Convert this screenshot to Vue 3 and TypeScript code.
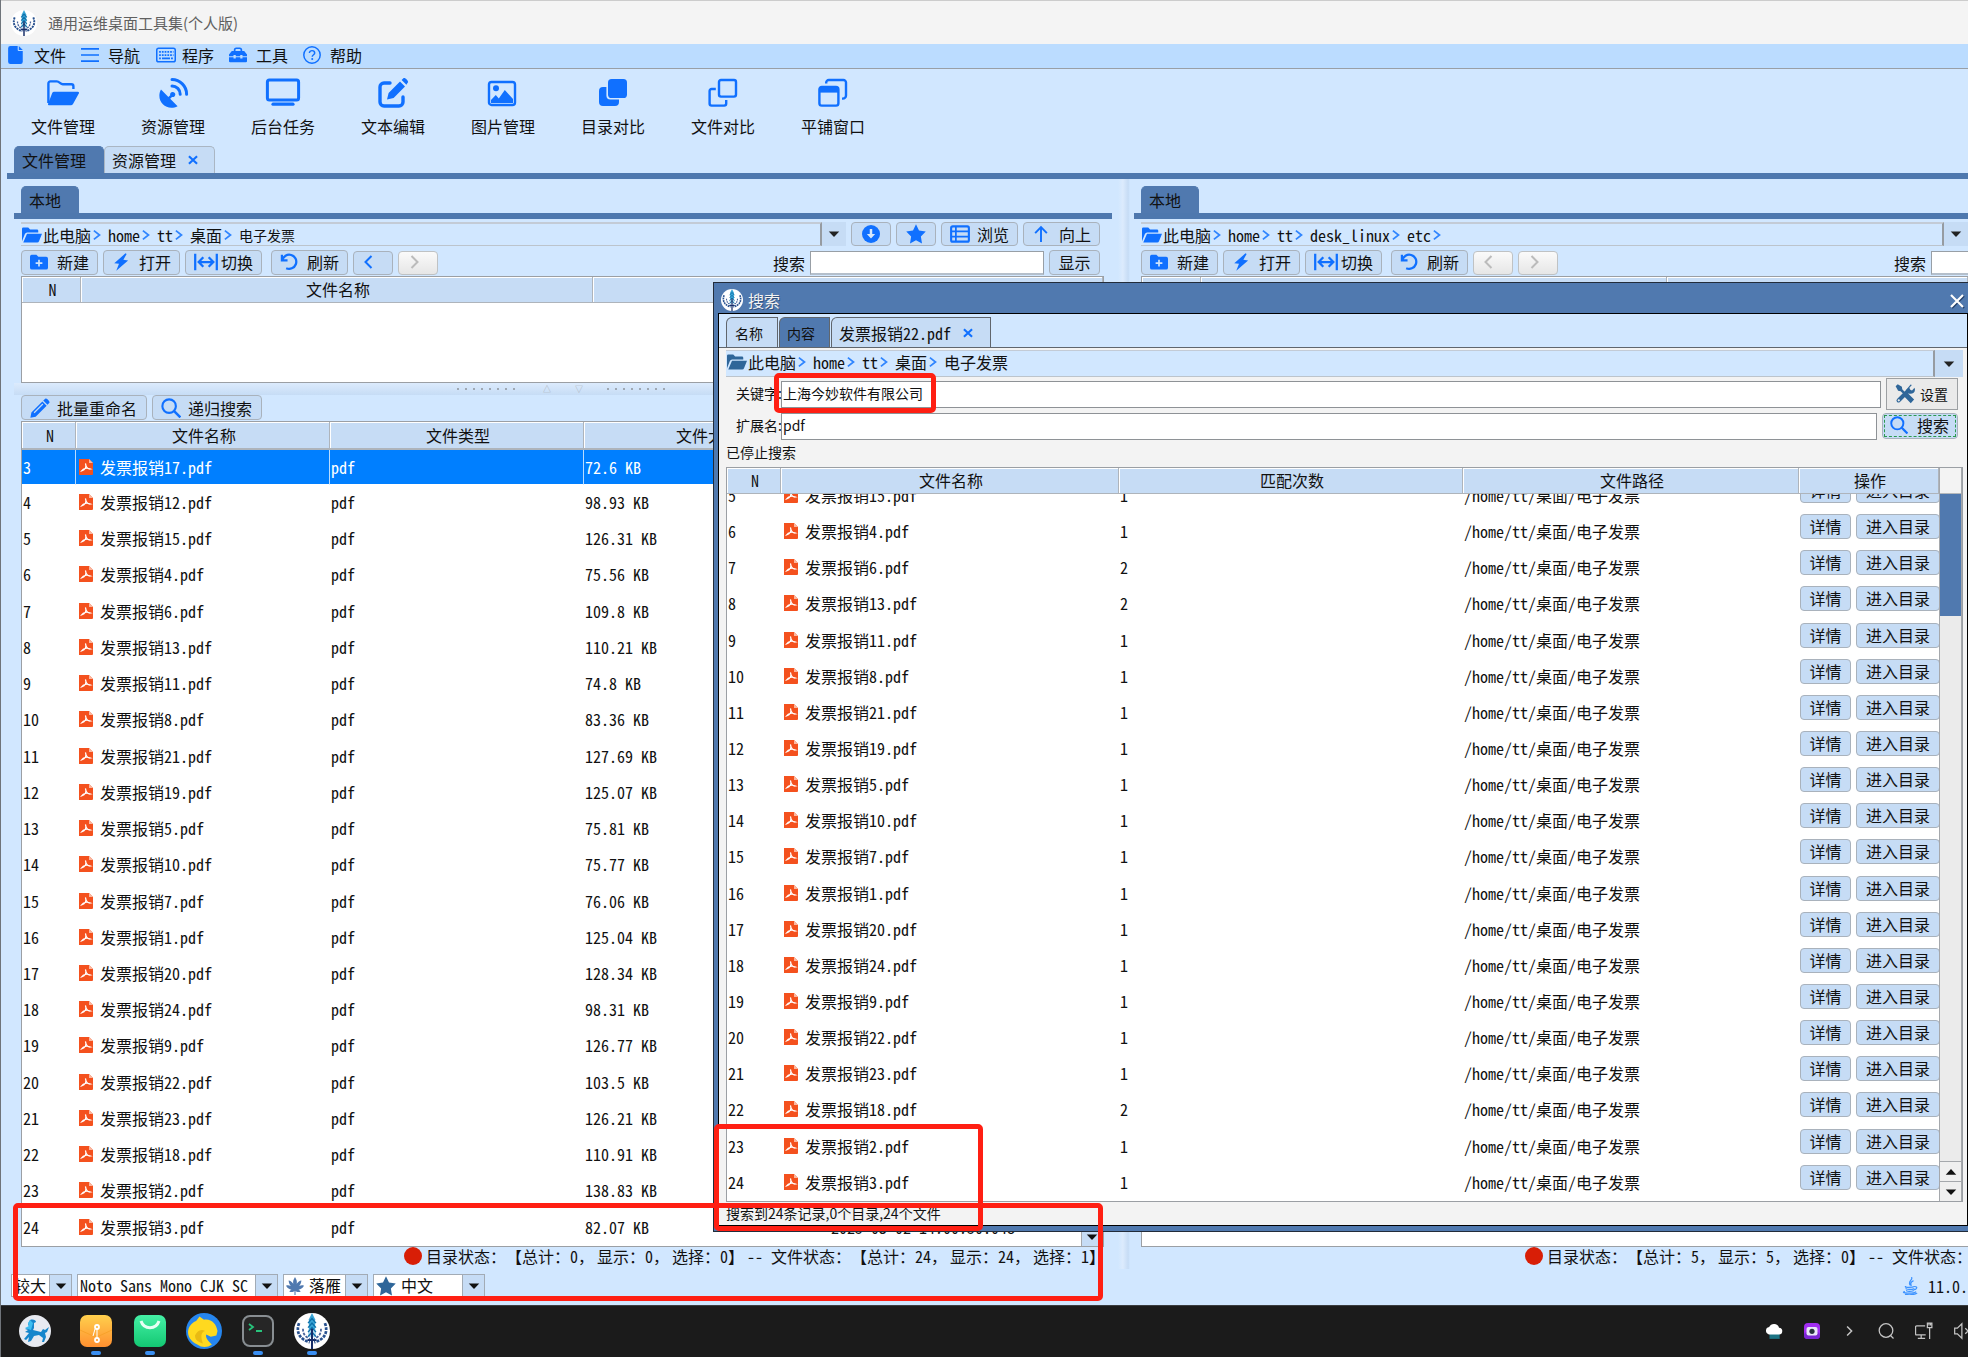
<script setup lang="ts">
import { h, onMounted, ref } from 'vue'

const icons: Record<string, string> = {
  file: '<path fill="currentColor" d="M3 0h6.500v3.500a1 1 0 0 0 1 1H14V14a2 2 0 0 1-2 2H3a2 2 0 0 1-2-2V2a2 2 0 0 1 2-2zm7.500 0L14 3.500h-3.500z"/>',
  menu: '<path stroke="currentColor" stroke-width="1.500" d="M0 2.500h16M0 8h16M0 13.500h16"/>',
  keyboard: '<rect x=".6" y="2.600" width="14.800" height="10.800" rx="1.500" fill="none" stroke="currentColor" stroke-width="1.200"/><path stroke="currentColor" stroke-width="1.400" stroke-dasharray="1.400 .8" d="M2.500 5.500h11.500M2.500 8h11.500"/><path stroke="currentColor" stroke-width="1.400" d="M2.500 10.600h1.400M4.800 10.600h6.400M12 10.600h1.500"/>',
  toolbox: '<path fill="none" stroke="currentColor" stroke-width="1.500" d="M5 5V3.500a1.500 1.500 0 0 1 1.500-1.500h3A1.500 1.500 0 0 1 11 3.500V5"/><path fill="currentColor" d="M2.500 4.500h11L16 7.500V9h-4V8h-2v1H6V8H4v1H0V7.500zM0 10h4v1h2v-1h4v1h2v-1h4v3.500a1 1 0 0 1-1 1H1a1 1 0 0 1-1-1z"/>',
  help: '<circle cx="8" cy="8" r="7.300" fill="none" stroke="currentColor" stroke-width="1.300"/><path fill="none" stroke="currentColor" stroke-width="1.300" d="M5.700 6.300c0-3 4.700-2.800 4.700 0 0 1.500-2.200 1.500-2.200 3.300"/><circle cx="8.200" cy="11.600" r=".9" fill="currentColor"/>',
  folderBig: '<path fill="none" stroke="currentColor" stroke-width="1.200" stroke-linejoin="round" d="M.7 13V3.200a1 1 0 0 1 1-1h3.200c1.300 0 1.800 1.400 3 1.400h4.300a1 1 0 0 1 1 1V6"/><path fill="currentColor" d="M3.600 7.400h11.800c.6 0 .8.400.5.900l-2.900 5.200a1.300 1.300 0 0 1-1.100.6H1.200c-.7 0-.9-.4-.6-.9L2.600 8a1.100 1.100 0 0 1 1-.6z"/>',
  dish: '<path fill="currentColor" d="M2 6.300 5.700 10l.9-.9a1.300 1.300 0 1 1 .9.900l-.9.900 3.700 3.700c-5.500 3-11.300-2.800-8.300-8.300z"/><path fill="none" stroke="currentColor" stroke-width="1.500" stroke-linecap="round" d="M7.500 1.300a7.300 7.300 0 0 1 7.300 7.300M7.500 4.500a4.100 4.100 0 0 1 4.100 4.100"/>',
  monitor: '<rect x=".2" y="1.500" width="15.600" height="10" rx="1" fill="none" stroke="currentColor" stroke-width="1.500"/><path stroke="currentColor" stroke-width="1.600" stroke-linecap="round" d="M3 13.600h10"/>',
  edit: '<path fill="none" stroke="currentColor" stroke-width="1.700" stroke-linecap="round" d="M6.500 3H3.500A2 2 0 0 0 1.500 5v7.500a2 2 0 0 0 2 2H11a2 2 0 0 0 2-2V10"/><path fill="currentColor" d="M5 11.300l.8-3.300 5.700-5.700 2.500 2.500-5.700 5.700zM12.300 1.500l.9-.9c.7-.7 2.900 1.500 2.200 2.200l-.7 1.100z"/>',
  image: '<rect x="1" y="2.500" width="13" height="11.500" rx="1.300" fill="none" stroke="currentColor" stroke-width="1.200"/><circle cx="4.500" cy="5.600" r="1.500" fill="currentColor"/><path fill="currentColor" d="M2 13v-1.500L4.400 9l1.500 1.700 3-4.200L13 11v2z"/>',
  copyFill: '<rect x="5.500" y="1" width="9.500" height="9.500" rx="1.800" fill="currentColor"/><path fill="currentColor" d="M4.700 5H3a2 2 0 0 0-2 2v5.500a2 2 0 0 0 2 2h6a2 2 0 0 0 2-2v-1.200H6.700a2 2 0 0 1-2-2z"/>',
  copy: '<rect x="6" y="1.500" width="8.500" height="8.300" rx="1" fill="none" stroke="currentColor" stroke-width="1.200"/><path fill="none" stroke="currentColor" stroke-width="1.200" d="M4.400 6H2.300a1 1 0 0 0-1 1v6.300a1 1 0 0 0 1 1h6.300a1 1 0 0 0 1-1v-1.800"/>',
  windows: '<rect x="1.200" y="5" width="9.500" height="9.300" rx="1.200" fill="none" stroke="currentColor" stroke-width="1.200"/><path fill="currentColor" d="M1.200 5.200h9.500v2.600H1.200z"/><path fill="none" stroke="currentColor" stroke-width="1.200" d="M4.600 3.300V2.800a1.300 1.300 0 0 1 1.300-1.300h7.300a1.300 1.300 0 0 1 1.300 1.300v6.400a1.600 1.600 0 0 1-1.600 1.600h-.4"/>',
  folder: '<path fill="currentColor" d="M0 13V3a1 1 0 0 1 1-1h4l1.500 1.500H12a1 1 0 0 1 1 1V6H4.200a2 2 0 0 0-1.900 1.200zM4 7h12l-2.400 6a1.500 1.500 0 0 1-1.400 1H1z"/>',
  chevron: '<path fill="none" stroke="currentColor" stroke-width="2.800" d="M3 1l9 7-9 7"/>',
  left: '<path fill="none" stroke="currentColor" stroke-width="2" d="M10.500 2l-6 6 6 6"/>',
  right: '<path fill="none" stroke="currentColor" stroke-width="2" d="M5.500 2l6 6-6 6"/>',
  newFolder: '<path fill="currentColor" d="M0 3.200A1.700 1.700 0 0 1 1.700 1.500h4L7.400 3.400h7A1.600 1.600 0 0 1 16 5v8a1.700 1.700 0 0 1-1.700 1.700H1.700A1.700 1.700 0 0 1 0 13z"/><path stroke="#cfe3fb" stroke-width="1.500" d="M8 6v6M5 9h6"/>',
  bolt: '<path fill="currentColor" d="M12 .3 2 9l4.200.6-2.400 6.200L14.300 6.700l-4.200-.6L13 .9z"/>',
  swap: '<path fill="none" stroke="currentColor" stroke-width="1.500" d="M.8 2.500v11M15.200 2.500v11M3.300 8h9.400M6.200 4.800 3.100 8l3.100 3.200M9.800 4.800 12.900 8l-3.100 3.200"/>',
  refresh: '<path fill="none" stroke="currentColor" stroke-width="2" d="M2 6.500A6.300 6.300 0 1 1 5.500 13.500M1.700 1.500v5h5"/>',
  down: '<circle cx="8" cy="8" r="8" fill="currentColor"/><path fill="#d7e8fb" d="M6.900 3.500h2.200V8h2.600L8 12 4.300 8h2.600z"/>',
  star: '<path fill="currentColor" d="m8 .2 2.400 5 5.400.8-3.900 3.900.9 5.700L8 13l-4.800 2.600.9-5.700L.2 6l5.400-.8z"/>',
  list: '<rect x=".9" y="1.900" width="14.200" height="12.200" rx="1.200" fill="none" stroke="currentColor" stroke-width="1.700"/><path stroke="currentColor" stroke-width="1.400" d="M1 5.800h14M1 10h14M4.700 2v12"/>',
  up: '<path fill="none" stroke="currentColor" stroke-width="1.700" d="M8 15V2M2.800 7.200 8 1.800l5.200 5.400"/>',
  pencil: '<path fill="currentColor" d="m10.600 2 1.600-1.500c.9-.9 4.200 2.400 3.300 3.300L14 5.400zM9.900 2.700l3.400 3.400-8.800 8.800L.3 15.700l.8-4.200z"/><path stroke="#c6dcf5" d="m3.300 11.800 7-7"/>',
  search: '<circle cx="6.500" cy="6.500" r="5.400" fill="none" stroke="currentColor" stroke-width="1.700"/><path stroke="currentColor" stroke-width="2" d="m10.500 10.500 5 5"/>',
  find: '<circle cx="8" cy="7.500" r="6.800" fill="none" stroke="currentColor" stroke-width="1.300"/><path stroke="currentColor" stroke-width="1.300" d="m12 12 3.500 3.500"/>',
  pdf: '<path fill="#f4511e" d="M1 0h10l4 4v11a1 1 0 0 1-1 1H1z"/><path fill="#fbb8a0" d="M11 0l4 4h-4z"/><path fill="none" stroke="#fff" stroke-width="1.200" d="M7.500 4.500c1.300 4-1 6.500-4 7.500 2-3 6-3.300 9-2-2.300.3-4.500-1.500-5-5.500z"/>',
  close: '<path stroke="currentColor" stroke-width="3.400" d="m1.500 2 13 12M14.500 2 1.500 14"/>',
  quit: '<path stroke="#24416c" stroke-width="2" d="m3 3 12 12M15 3 3 15"/><path stroke="currentColor" stroke-width="2.200" d="m2 2 12 12M14 2 2 14"/>',
  caret: '<path fill="currentColor" d="M1 4.500h14L8 12z"/>',
  tools: '<path stroke="currentColor" stroke-width="3.200" stroke-linecap="round" d="m2.800 13.200 8-8"/><path fill="currentColor" d="M9 4.500 12.500.4l1 .3-2 2.300.5 1.600 1.600.5 2-2.200.4 1.500c0 3-3 4-5 3.100zM.5 1.800 2.200.2l3.300 2 .3 2L9 7.500l1.300-.2 5 5-2.700 3-4.800-5V9L4.500 5.800l-2-.4z"/><circle cx="3" cy="13" r=".9" fill="#eee"/>',
  leaf: '<path fill="currentColor" d="M8 0c1.500 2.500 2 4 1.500 6 1.400-2 2.500-2.700 4.200-3-.2 2.500-1 3.700-2 5 1.500-.6 2.700-.8 4.300-.3-1.400 2.200-3 3.300-4.800 3.600 1 .5 1.300.9 1.800 1.700-2 .8-3.500.3-5-.8-1.500 1.100-3 1.600-5 .8.500-.8.800-1.200 1.800-1.700C3 11 1.400 9.900 0 7.700c1.600-.5 2.800-.3 4.300.3-1-1.300-1.800-2.500-2-5 1.700.3 2.800 1 4.200 3C6 4 6.500 2.500 8 0z"/><path stroke="currentColor" d="M8 12v4"/>',
  java: '<path fill="none" stroke="currentColor" stroke-width="1.100" stroke-linecap="round" d="M9.500.5c1 2.500-3.500 3-1.500 6.500M10.800 3.500C7.500 5 8.800 6 9 7.500M4 8.500c-1 1 6 1 8 0M4.500 10.300c0 1 5 1 7 .2M5 12c0 1 4 1 6 .2M13 8.500c2 .5.500 2.500-1 2.700M3 13c-4 1.500 8 2 10 .3M4 15.500c3 .6 8 .3 10-1"/>',
  logo: '<circle cx="16" cy="16" r="16" fill="#fff"/><path fill="#39a5d6" d="m16 0 2.800 5.500v10H13.200v-10z"/><path fill="#b4dcef" d="M12.500 14.500h7v7h-7z"/><path fill="none" stroke="#0e6fa9" stroke-width="1.300" d="m12.500 9 3.500-4 3.500 4m-7 4 3.500-4 3.500 4m-7 4 3.500-4 3.500 4m-7 4 3.500-4 3.500 4"/><path stroke="#172d68" stroke-width="1.800" d="M16 14v18M12 24h8"/><path fill="none" stroke="#28518f" stroke-width="2.400" stroke-dasharray="2.600 1" d="M4.500 9C1.500 17 5 23.500 14 26M27.500 9c3 8 0 14.500-9.500 17"/><path fill="none" stroke="#48649b" stroke-width="1.600" stroke-dasharray="2.400 1.200" d="M8 14c0 5 2 7 6 9M24 14c0 5-2 7-6 9"/>',
  cloud: '<path fill="#1c7484" d="M4 9h9v6H4z"/><path fill="#fff" d="M3.500 11a3.300 3.300 0 0 1 .2-6.500 4.800 4.800 0 0 1 8.800.5 3 3 0 0 1-.3 6z"/>',
  camera: '<rect width="16" height="16" rx="4" fill="#a22df2"/><rect y="9" width="16" height="7" rx="3.500" fill="#7a24d3"/><rect x="2.500" y="4" width="11" height="8.500" rx="2" fill="#e9e6f7"/><circle cx="8" cy="8.300" r="2.600" fill="#28333e"/>',
  netw: '<path fill="none" stroke="currentColor" stroke-width="1.100" d="M9 3.500H1.500a1 1 0 0 0-1 1v6a1 1 0 0 0 1 1h8M5.500 11.500V14M2.500 14.500H9M11 1v4h4V1zM13 5v10M12.400 1v2M13.800 1v2"/>',
  mute: '<path fill="none" stroke="currentColor" stroke-width="1.100" d="M.6 5.500H3l4-4v13l-4-4H.6zM10 5.500l5 5M15 5.500l-5 5"/>',
  kylin: '<circle cx="16" cy="16" r="16" fill="#e7eaf1"/><path fill="#1686cc" d="M11 5c3-1 6 0 6 2l-2 1v5l-1 2 8 2 2-3 2 1 4-3-2 5-2 1 1 4-2 5h-2l1-4-4-3-5 1-3 5-3 1 1-5-3 3-2-1 5-6-4-1 3-2-3-1 4-2-1-3z"/><path fill="#3cbdf1" d="m11 5 3 3-2 7-6-2 4-2-1-3z"/>',
  archive: '<defs><linearGradient id="ga" x2="0" y2="1"><stop stop-color="#ffd04d"/><stop offset="1" stop-color="#ff9030"/></linearGradient></defs><rect width="32" height="32" rx="7" fill="url(#ga)"/><path fill="none" stroke="#f7a22b" d="m0 15 13 6h6l13-6"/><circle cx="17" cy="12" r="2" fill="#ffb73d" stroke="#fff" stroke-width="1.800"/><circle cx="17" cy="25" r="2" fill="#ff9a30" stroke="#fff" stroke-width="1.800"/><path fill="none" stroke="#fff" d="M17 14v9M15 14l-2 7"/>',
  store: '<defs><linearGradient id="gb" x2="0" y2="1"><stop stop-color="#45f0a6"/><stop offset="1" stop-color="#13c872"/></linearGradient></defs><rect width="32" height="32" rx="7" fill="url(#gb)"/><path fill="none" stroke="#e7fff4" stroke-width="3" d="M7 6c3 9 15 9 18 0"/>',
  tiger: '<circle cx="16" cy="16" r="16" fill="#2686ef"/><path fill="#ffd91f" d="m9 7 3-4 4 3c7-1 11 4 12 10l-1 4-5 1-4-2c-1 3 2 6 5 9-4 3-9 3-13 0C4 25 1 20 2 15c1-4 4-7 7-8z"/><path fill="#e9ba13" d="M8 20c2-4 5-6 9-4-4 1-4 5-2 11-4-1-7-3-7-7z"/>',
  term: '<rect x="1" y="1" width="30" height="30" rx="7" fill="#262626" stroke="#888e92" stroke-width="2"/><path fill="none" stroke="#28c47c" stroke-width="1.800" d="m7 9 4 3-4 3M14 16h6"/>'
}
const boxes: Record<string, string> = { logo: '0 0 32 32', kylin: '0 0 32 32', archive: '0 0 32 32', store: '0 0 32 32', tiger: '0 0 32 32', term: '0 0 32 32' }
const Icon = (p: { n: string }) =>
  h('svg', { viewBox: boxes[p.n] ?? '0 0 16 16', class: 'icon', 'aria-hidden': 'true', innerHTML: icons[p.n] })

const menus = [['file', '文件'], ['menu', '导航'], ['keyboard', '程序'], ['toolbox', '工具'], ['help', '帮助']]
const tools = [
  ['folderBig', '文件管理'], ['dish', '资源管理'], ['monitor', '后台任务'], ['edit', '文本编辑'],
  ['image', '图片管理'], ['copyFill', '目录对比'], ['copy', '文件对比'], ['windows', '平铺窗口']
]
const actions = [['newFolder', '新建'], ['bolt', '打开'], ['swap', '切换'], ['refresh', '刷新']]

const files: [number, number, string, number][] = [
  [3, 17, '72.6', 1], [4, 12, '98.93', 1], [5, 15, '126.31', 1], [6, 4, '75.56', 1], [7, 6, '109.8', 2],
  [8, 13, '110.21', 2], [9, 11, '74.8', 1], [10, 8, '83.36', 1], [11, 21, '127.69', 1], [12, 19, '125.07', 1],
  [13, 5, '75.81', 1], [14, 10, '75.77', 1], [15, 7, '76.06', 1], [16, 1, '125.04', 1], [17, 20, '128.34', 1],
  [18, 24, '98.31', 1], [19, 9, '126.77', 1], [20, 22, '103.5', 1], [21, 23, '126.21', 1], [22, 18, '110.91', 2],
  [23, 2, '138.83', 1], [24, 3, '82.07', 1]
]
const results = files.slice(2)

const keyword = ref('上海今妙软件有限公司')
const ext = ref('pdf')
const scroller = ref<HTMLElement | null>(null)
onMounted(() => {
  if (scroller.value) scroller.value.scrollTop = scroller.value.scrollHeight
})
</script>

<template>
  <div class="desktop">
    <header class="title"><Icon n="logo" class="i26" /><span>通用运维桌面工具集(个人版)</span></header>
    <nav class="menubar">
      <button v-for="m in menus" :key="m[1]" class="plain"><span class="mi"><Icon :n="m[0]" :class="m[0] === 'keyboard' ? 'i22' : 'i18'" /></span>{{ m[1] }}</button>
    </nav>
    <div class="toolbar">
      <button v-for="t in tools" :key="t[1]" class="plain"><Icon :n="t[0]" :class="t[0] === 'monitor' ? 'i34' : 'i32'" />{{ t[1] }}</button>
    </div>
    <div class="tabs main-tabs">
      <button class="tab on">文件管理</button>
      <button class="tab">资源管理<Icon n="close" class="i9 blue" /></button>
    </div>

    <main class="work">
      <section class="pane">
        <div class="tabs"><button class="tab on">本地</button></div>
        <div class="path-row">
          <div class="crumbs">
            <Icon n="folder" class="i22 blue" />
            <a href="#">此电脑</a><Icon n="chevron" class="i10" />
            <a href="#">home</a><Icon n="chevron" class="i10" />
            <a href="#">tt</a><Icon n="chevron" class="i10" />
            <a href="#">桌面</a><Icon n="chevron" class="i10" />
            <a href="#" class="small">电子发票</a>
          </div>
          <button class="drop" aria-label="路径列表"><Icon n="caret" class="i12" /></button>
          <button class="btn sq" aria-label="下载"><Icon n="down" class="i18" /></button>
          <button class="btn sq" aria-label="收藏"><Icon n="star" class="i20" /></button>
          <button class="btn std"><Icon n="list" class="i20" />浏览</button>
          <button class="btn std"><Icon n="up" class="i18" />向上</button>
        </div>
        <div class="act-row">
          <button v-for="a in actions" :key="a[1]" class="btn std" :class="a[0]"><Icon :n="a[0]" :class="a[0] === 'swap' ? 'i24' : 'i18'" />{{ a[1] }}</button>
          <button class="btn sq nav" aria-label="后退"><Icon n="left" class="i16" /></button>
          <button class="btn sq nav" disabled aria-label="前进"><Icon n="right" class="i16" /></button>
          <label for="find-left" class="push">搜索</label>
          <input id="find-left" class="find" type="text" />
          <button class="btn show">显示</button>
        </div>
        <div class="dirs">
          <table>
            <colgroup><col class="w59" /><col class="w512" /><col /></colgroup>
            <thead><tr><th>N</th><th>文件名称</th><th></th></tr></thead>
          </table>
        </div>
        <div class="hsplit"><i class="dots"></i><b>△</b><b>▽</b><i class="dots"></i></div>
        <div class="act-row second">
          <button class="btn rename"><Icon n="pencil" class="i20" />批量重命名</button>
          <button class="btn recur"><Icon n="search" class="i20" />递归搜索</button>
        </div>
        <div class="grid-box">
          <div class="scroll">
            <table class="fill list">
              <colgroup><col class="w54" /><col class="w254" /><col class="w254" /><col class="w246" /><col /></colgroup>
              <thead><tr><th>N</th><th>文件名称</th><th>文件类型</th><th>文件大小</th><th>修改时间</th></tr></thead>
              <tbody>
                <tr v-for="f in files" :key="f[0]" :class="{ sel: f[0] === 3 }">
                  <td>{{ f[0] }}</td>
                  <td><div class="name"><Icon n="pdf" class="i16" />发票报销{{ f[1] }}.pdf</div></td>
                  <td>pdf</td>
                  <td>{{ f[2] }} KB</td>
                  <td>{{ f[0] === 24 ? '2025-03-02 14:00:50.048' : '' }}</td>
                </tr>
              </tbody>
            </table>
          </div>
          <div class="bar light"><i class="grow"></i><button class="arrow" aria-label="向下滚动"><Icon n="caret" class="i12" /></button></div>
        </div>
        <div class="state left">
          <i class="dot"></i><span>目录状态：【总计：0，</span><span>显示：0，</span><span>选择：0】</span><span>-- 文件状态：【总计：24，</span><span>显示：24，</span><span>选择：1】</span>
        </div>
      </section>

      <div class="vsplit"></div>

      <section class="pane right">
        <div class="tabs"><button class="tab on">本地</button></div>
        <div class="path-row">
          <div class="crumbs">
            <Icon n="folder" class="i22 blue" />
            <a href="#">此电脑</a><Icon n="chevron" class="i10" />
            <a href="#">home</a><Icon n="chevron" class="i10" />
            <a href="#">tt</a><Icon n="chevron" class="i10" />
            <a href="#">desk_linux</a><Icon n="chevron" class="i10" />
            <a href="#">etc</a><Icon n="chevron" class="i10" />
          </div>
          <button class="drop" aria-label="路径列表"><Icon n="caret" class="i12" /></button>
        </div>
        <div class="act-row">
          <button v-for="a in actions" :key="a[1]" class="btn std" :class="a[0]"><Icon :n="a[0]" :class="a[0] === 'swap' ? 'i24' : 'i18'" />{{ a[1] }}</button>
          <button class="btn sq nav" disabled aria-label="后退"><Icon n="left" class="i16" /></button>
          <button class="btn sq nav" disabled aria-label="前进"><Icon n="right" class="i16" /></button>
          <label for="find-right" class="push">搜索</label>
          <input id="find-right" class="find cut" type="text" />
        </div>
        <div class="grid-box tall">
          <table>
            <colgroup><col class="w59" /><col class="w466" /><col /></colgroup>
            <thead><tr><th></th><th></th><th></th></tr></thead>
          </table>
        </div>
        <div class="state">
          <i class="dot"></i><span>目录状态：【总计：5，</span><span>显示：5，</span><span>选择：0】</span><span>-- 文件状态：</span>
        </div>
      </section>
    </main>

    <footer class="foot">
      <span class="combo c1"><select aria-label="字号"><option>较大</option></select><i><Icon n="caret" class="i12" /></i></span>
      <span class="combo c2"><select aria-label="字体"><option>Noto Sans Mono CJK SC</option></select><i><Icon n="caret" class="i12" /></i></span>
      <span class="combo c3"><Icon n="leaf" class="i18 leaf" /><select aria-label="主题"><option>落雁</option></select><i><Icon n="caret" class="i12" /></i></span>
      <span class="combo c4"><Icon n="star" class="i20 navy" /><select aria-label="语言"><option>中文</option></select><i><Icon n="caret" class="i12" /></i></span>
      <span class="jvm"><Icon n="java" class="i18" />11.0.</span>
    </footer>

    <div class="taskbar">
      <button v-for="(n, k) in ['kylin', 'archive', 'store', 'tiger', 'term', 'logo']" :key="n" class="plain app" :class="[n, { run: k !== 0 && k !== 3 }]" :aria-label="n"><Icon :n="n" :class="n === 'tiger' || n === 'logo' ? 'i36' : 'i32'" /></button>
      <div class="tray">
        <Icon n="cloud" class="i18" /><Icon n="camera" class="i16" /><Icon n="right" class="i12" /><Icon n="find" class="i16" /><Icon n="netw" class="i18" /><Icon n="mute" class="i18" />
      </div>
    </div>

    <div class="dialog" role="dialog" aria-label="搜索">
      <div class="dlg-title"><Icon n="logo" class="i22" /><span>搜索</span><button class="plain" aria-label="关闭"><Icon n="quit" class="i16" /></button></div>
      <div class="dlg-body">
        <div class="dlg-tabs">
          <button class="dt t1">名称</button><button class="dt t2 on">内容</button><button class="dt t3">发票报销22.pdf<Icon n="close" class="i9 blue" /></button>
        </div>
        <div class="dlg-main">
          <div class="path-row">
            <div class="crumbs">
              <Icon n="folder" class="i22 navy" />
              <a href="#">此电脑</a><Icon n="chevron" class="i10" />
              <a href="#">home</a><Icon n="chevron" class="i10" />
              <a href="#">tt</a><Icon n="chevron" class="i10" />
              <a href="#">桌面</a><Icon n="chevron" class="i10" />
              <a href="#">电子发票</a>
            </div>
            <button class="drop" aria-label="路径列表"><Icon n="caret" class="i12" /></button>
          </div>
          <div class="field first"><label for="kw">关键字:</label><input id="kw" v-model="keyword" type="text" /><button class="setting"><Icon n="tools" class="i20" />设置</button></div>
          <div class="field"><label for="ext">扩展名:</label><input id="ext" v-model="ext" type="text" /><button class="btn go"><span><Icon n="search" class="i18" />搜索</span></button></div>
          <p class="msg">已停止搜索</p>
          <div class="grid-box">
            <div ref="scroller" class="scroll">
              <table class="fill hits">
                <colgroup><col class="w54" /><col class="w338" /><col class="w344" /><col class="w336" /><col /></colgroup>
                <thead><tr><th>N</th><th>文件名称</th><th>匹配次数</th><th>文件路径</th><th>操作</th></tr></thead>
                <tbody>
                  <tr v-for="f in results" :key="f[0]">
                    <td>{{ f[0] }}</td>
                    <td><div class="name"><Icon n="pdf" class="i16" />发票报销{{ f[1] }}.pdf</div></td>
                    <td>{{ f[3] }}</td>
                    <td>/home/tt/桌面/电子发票</td>
                    <td class="ops"><div><button class="btn">详情</button><button class="btn wide">进入目录</button></div></td>
                  </tr>
                </tbody>
              </table>
            </div>
            <div class="bar"><i class="cap"></i><i class="thumb"></i><i class="grow"></i><button class="arrow" aria-label="向上滚动"><Icon n="caret" class="i12 flip" /></button><button class="arrow" aria-label="向下滚动"><Icon n="caret" class="i12" /></button></div>
          </div>
          <p class="sum">搜索到24条记录,0个目录,24个文件</p>
        </div>
      </div>
    </div>

    <div class="mark m1"></div>
    <div class="mark m2"></div>
    <div class="mark m3"></div>
  </div>
</template>

<style>
body { background: #d1e7ff; overflow: hidden; }
</style>

<style scoped>
* { box-sizing: border-box; }
.desktop { position: relative; display: flex; flex-direction: column; height: 100vh; overflow: hidden; border-left: 1px solid #6f747a; background: #d1e7ff; color: #111; font: 16px/24px "Noto Sans Mono CJK SC", "Noto Sans CJK SC", monospace; white-space: nowrap; }
button, input, select { font: inherit; color: inherit; margin: 0; }
.icon { flex: none; display: block; width: 16px; height: 16px; }
.i9 { width: 10px; height: 10px; } .i10 { width: 10px; height: 12px; } .i12 { width: 12px; height: 12px; }
.i16 { width: 16px; height: 16px; } .i18 { width: 18px; height: 18px; } .i20 { width: 20px; height: 20px; } .i22 { width: 22px; height: 20px; }
.i24 { width: 26px; height: 24px; } .i26 { width: 26px; height: 26px; } .i32 { width: 32px; height: 32px; } .i34 { width: 36px; height: 32px; } .i36 { width: 36px; height: 36px; }
.blue { color: #1070ff; } .navy { color: #2f6699; } .leaf { color: #5079af; } .flip { transform: rotate(180deg); }
.plain { display: flex; align-items: center; border: 0; padding: 0; background: none; }
.title { flex: none; display: flex; align-items: center; gap: 11px; height: 44px; padding: 0 0 0 10px; border-top: 1px solid #ccc; background: #f4f4f4; color: #606060; font: 15px/24px "Noto Sans CJK SC", sans-serif; }
.menubar { flex: none; display: flex; height: 25px; padding: 0 0 2px 6px; background: #bbdcff; border-bottom: 1px solid #999fa6; }
.menubar .plain { width: 74px; }
.mi { width: 27px; }
.mi .icon, .toolbar .icon { color: #1070ff; }
.toolbar { flex: none; display: flex; height: 77px; padding-left: 7px; }
.toolbar .plain { width: 110px; flex-direction: column; padding-top: 8px; gap: 5px; }
.tabs { flex: none; display: flex; align-items: flex-end; height: 33px; padding-left: 7px; border-bottom: 6px solid #4e78ae; }
.main-tabs { height: 33px; margin-left: 6px; }
.tab { display: flex; align-items: center; gap: 12px; height: 27px; padding: 0 16px 1px 7px; border: 1px solid #aab6c3; border-bottom: 0; border-radius: 5px 5px 0 0; background: #c6dcf5; }
.tab.on { padding-right: 17px; background: #5079af; border-color: #5079af; }
.work { flex: 1; min-height: 0; display: grid; grid-template-columns: minmax(0, 1098fr) 22px minmax(0, 834fr); padding-left: 13px; }
.pane { display: flex; flex-direction: column; min-height: 0; min-width: 0; padding-top: 7px; overflow: hidden; }
.vsplit { margin: 0 4px 0 6px; background: linear-gradient(90deg, #d1e7ff, #dcebfd 40%, #c6dcf5 85%, #d1e7ff); }
.path-row { flex: none; display: flex; gap: 5px; height: 25px; margin: 3px 12px 0 7px; }
.crumbs { flex: 1; display: flex; align-items: center; height: 24px; border-top: 2px solid #c3cbd6; border-bottom: 1px solid #bcc4cc; border-right: 2px solid #969ba1; overflow: hidden; }
.crumbs a { color: inherit; text-decoration: none; }
.crumbs .i10 { margin: 0 6px 0 1px; color: #2f85ff; }
.crumbs .small { font-size: 14px; }
.drop { display: flex; align-items: center; justify-content: center; width: 24px; height: 24px; margin-left: -5px; border: 0; padding: 0; background: #c6dcf5; color: #222; }
.btn { display: flex; align-items: center; justify-content: space-between; height: 25px; padding: 0 8px 1px; border: 1px solid #a9b2bc; border-radius: 4px; background: #c6dcf5; }
.btn .icon { color: #1070ff; }
.std { width: 77px; }
.sq { width: 40px; justify-content: center; }
.path-row .btn { height: 24px; }
.act-row { flex: none; display: flex; gap: 5px; align-items: center; height: 25px; margin: 3px 12px 0 7px; line-height: 22px; }
.swap { padding: 0 8px 1px 7px; }
.refresh { margin-left: 4px; }
.nav { height: 24px; padding-right: 16px; }
.btn:disabled { background: linear-gradient(#fafafa, #e6e6e6); border-color: #bfc2c4; }
.btn:disabled .icon { color: #bbb; }
.push { margin-left: auto; }
.find { width: 234px; height: 24px; border: 1px solid #989fa6; border-bottom: 2px solid #b4bfcb; background: #fff; padding: 0 3px; }
.find.cut { width: 37px; border-right: 0; }
.show { width: 51px; padding: 0 0 1px; justify-content: center; }
.right .path-row, .right .act-row { margin-right: 0; }
.dirs { flex: none; height: 107px; margin: 1px 8px 0 7px; border: 1px solid #9b9fa4; background: #fff; }
table { width: 100%; table-layout: fixed; border-collapse: separate; border-spacing: 0; }
th { height: 26px; padding: 0 0 0 3px; font-weight: 400; line-height: 23px; background: #c6dcf5; border: solid #aeb4bb; border-width: 0 1px 1px 0; box-shadow: inset 1px 1px #fff; overflow: hidden; }
td { padding: 0 0 2px 1px; overflow: hidden; line-height: 24px; }
.w54 { width: 54px; } .w59 { width: 59px; } .w246 { width: 246px; } .w254 { width: 254px; } .w336 { width: 336px; }
.w338 { width: 338px; } .w344 { width: 344px; } .w466 { width: 466px; } .w512 { width: 512px; }
.hsplit { flex: none; display: flex; justify-content: center; align-items: center; gap: 24px; height: 12px; background: linear-gradient(#dcebfd, #c6dcf5); line-height: 10px; color: #a9afb6; }
.hsplit b { font-size: 8px; font-weight: 400; }
.dots { width: 62px; height: 2px; background: repeating-linear-gradient(90deg, #9fa8b3 0 2px, transparent 2px 8px); }
.second { margin-top: 0; }
.rename { width: 126px; } .recur { width: 110px; }
.rename, .recur { padding: 0 9px 0 8px; }
.grid-box { flex: 1; min-height: 0; display: flex; margin: 1px 8px 0 7px; border: 1px solid #9b9fa4; background: #fff; }
.tall { margin-right: 0; border-right: 0; display: block; }
.scroll { flex: 1; min-width: 0; overflow: hidden; }
.fill { height: 100%; }
.list th { height: 28px; border-bottom-width: 2px; }
.name { display: flex; align-items: center; gap: 6px; padding-left: 1px; }
.list .sel td { padding-bottom: 0; background: #007fff; color: #fff; border-right: 1px solid #b9dcff; border-bottom: 1px solid #fff; }
.bar { flex: none; width: 23px; display: flex; flex-direction: column; background: #ebebeb; border: solid #a5a8ac; border-width: 0 1px; }
.light { background: #d1e7ff; width: 22px; }
.grow { flex: 1; }
.arrow { display: flex; align-items: center; justify-content: center; height: 20px; padding: 0; border: 0; border-top: 1px solid #a5a8ac; background: #efefef; color: #111; }
.light .arrow { background: #c6dcf5; }
.cap { height: 26px; background: #f3f3f3; border-bottom: 1px solid #b5b8bb; }
.thumb { height: 122px; background: #5079af; }
.state { flex: none; display: flex; align-items: center; justify-content: flex-end; gap: 3px; height: 22px; padding-bottom: 4px; line-height: 18px; text-spacing-trim: space-all; }
.state .dot { width: 18px; height: 18px; margin-right: 1px; border-radius: 50%; background: #d81e06; }
.state.left { padding-right: 7px; }
.right .state { margin-right: -4px; }
.foot { flex: none; display: flex; align-items: center; gap: 5px; height: 36px; padding: 0 0 3px 10px; }
.combo { display: flex; align-items: center; height: 23px; padding-left: 2px; background: #fff; border: 1px solid #a2abb5; }
.combo select { flex: 1; min-width: 0; height: 21px; border: 0; padding: 0; background: none; appearance: none; line-height: 21px; }
.combo i { display: flex; align-items: center; justify-content: center; width: 22px; height: 21px; border-left: 1px solid #a2abb5; background: #c6dcf5; }
.c1 { width: 61px; } .c2 { width: 201px; } .c3 { width: 85px; } .c4 { width: 112px; }
.c3 select, .c4 select { margin-left: 5px; }
.jvm { display: flex; align-items: center; gap: 9px; margin-left: auto; }
.jvm .icon { color: #3d93ff; }
.taskbar { flex: none; display: flex; align-items: center; height: 52px; padding-left: 7px; border-top: 1px solid #3a3d40; background: #1b1b1b; }
.app { position: relative; width: 54px; height: 51px; padding-bottom: 1px; justify-content: center; }
.kylin { margin-right: 7px; }
.run::after { content: ""; position: absolute; left: 22px; bottom: 2px; width: 10px; height: 4px; border-radius: 2px; background: #3a8ff2; }
.tray { display: flex; align-items: center; gap: 21px; margin: 0 -4px 2px auto; color: #c4c4c4; }
.tray .i12 { margin: 0 2px; }

.dialog { position: absolute; left: 712px; right: -6px; top: 282px; bottom: 125px; display: flex; flex-direction: column; padding: 0 5px 5px 4px; border: 1px solid #222c3a; background: #5079af; }
.dlg-title { flex: none; display: flex; align-items: center; gap: 5px; height: 30px; padding: 3px 3px 0 3px; color: #f3f3f3; text-shadow: 1px 1px #33527e; }
.dlg-title .icon.i22 { height: 24px; }
.dlg-title .plain { margin: 2px 0 0 auto; color: #fff; }
.dlg-body { flex: 1; min-height: 0; display: flex; flex-direction: column; border: 1px solid #000; background: #f3f3f3; }
.dlg-tabs { flex: none; display: flex; align-items: flex-end; gap: 1px; height: 34px; padding-left: 7px; background: #d1e7ff; border-bottom: 1px solid #60666d; }
.dt { display: flex; align-items: center; gap: 12px; height: 30px; padding: 1px 0 0 8px; border: 1px solid #60666d; border-bottom: 0; border-radius: 6px 0 0 0; background: #c6dcf5; }
.t1, .t2 { font-size: 14px; } .t1 { width: 52px; } .t2 { width: 51px; padding-left: 7px; } .t3 { width: 160px; padding-left: 7px; }
.dt.on { background: #5079af; }
.dlg-main { flex: 1; min-height: 0; display: flex; flex-direction: column; padding: 0 4px 0 7px; font-family: "Noto Sans CJK SC", sans-serif; font-size: 14px; }
.dlg-main .path-row, .dlg-main table, .dlg-main .go { font-family: "Noto Sans Mono CJK SC", "Noto Sans CJK SC", monospace; font-size: 16px; }
.dlg-main .path-row { margin: 2px 0 0; height: 27px; }
.dlg-main .crumbs, .dlg-main .drop { height: 27px; }
.dlg-main .crumbs { padding-bottom: 3px; background: #d1e7ff; border-top-width: 1px; }
.dlg-main .drop { width: 28px; }
.field { flex: none; display: flex; align-items: center; height: 32px; padding: 0 5px 0 10px; }
.first { margin-top: 1px; }
.field label { width: 45px; padding-bottom: 2px; }
.field input { flex: 1; min-width: 0; height: 27px; padding: 0 1px 2px 1px; border: 1px solid #8e9296; background: #fff; }
.setting { display: flex; align-items: center; justify-content: space-between; width: 72px; height: 32px; margin-left: 5px; padding: 0 9px 0 8px; border: 1px solid #9da0a3; background: #eaeaea; }
.setting .icon { color: #2f6699; }
.go { width: 76px; height: 26px; margin-left: 5px; padding: 1px; }
.go span { flex: 1; display: flex; align-items: center; justify-content: space-between; height: 22px; padding: 0 6px 2px 5px; border: 1px dashed #2b9a4e; }
.msg { flex: none; margin: 0; height: 25px; line-height: 20px; }
.dlg-main .grid-box { margin: 0; }
.hits { height: calc(100% + 16px); }
.hits th { position: sticky; top: 0; z-index: 1; }
.hits .ops { padding: 0; vertical-align: top; }
.ops div { display: flex; gap: 5px; padding-left: 1px; }
.ops .btn { flex: none; width: 51px; padding: 0 0 1px; justify-content: center; }
.ops .wide { width: 84px; }
.sum { flex: none; margin: 0; height: 23px; line-height: 22px; }
.mark { position: absolute; border: 5px solid #ff1f13; border-radius: 5px; pointer-events: none; }
.m1 { left: 773px; top: 373px; width: 162px; height: 40px; }
.m2 { left: 713px; top: 1124px; width: 269px; height: 107px; }
.m3 { left: 12px; top: 1203px; width: 1090px; height: 98px; }
</style>
